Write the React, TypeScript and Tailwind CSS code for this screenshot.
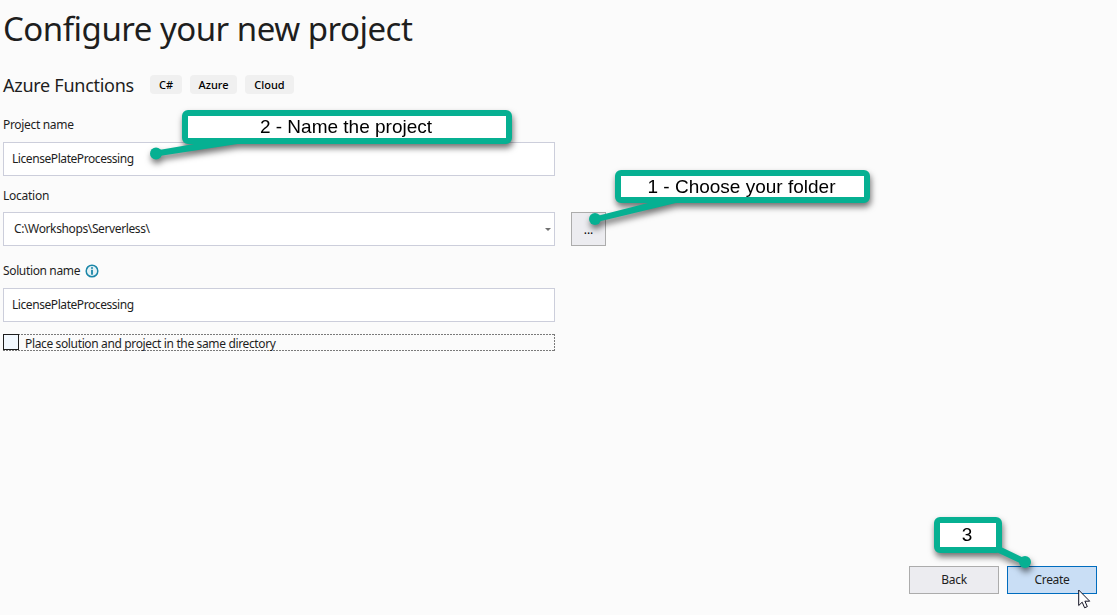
import React from "react";

const GREEN = "#06b092";

function Tag({ children, className }: { children: React.ReactNode; className: string }) {
  return (
    <span className={`flex h-[19px] items-center justify-center rounded-[4px] bg-[#f0f0f0] text-[11px] leading-none font-medium whitespace-nowrap text-black ${className}`}>
      {children}
    </span>
  );
}

function Callout({ children, className }: { children: React.ReactNode; className: string }) {
  return (
    <div
      className={`absolute flex items-center justify-center rounded-[6px] border-[6px] border-[#06b092] bg-white pr-[2px] font-['Liberation_Sans',Arial,sans-serif] text-[19px] leading-none whitespace-nowrap text-black ${className}`}
    >
      {children}
    </div>
  );
}

function InfoIcon() {
  return (
    <svg width="14" height="14" viewBox="0 0 14 14" className="ml-[5px] shrink-0">
      <circle cx="7" cy="7" r="5.8" fill="#e3f1f5" stroke="#1a86a8" strokeWidth="1.5" />
      <rect x="6.1" y="3.2" width="1.8" height="1.6" fill="#1a86a8" />
      <rect x="6.1" y="5.8" width="1.8" height="4.9" fill="#1a86a8" />
    </svg>
  );
}

export default function App() {
  return (
    <div className="relative flex h-[615px] w-[1117px] flex-col overflow-hidden bg-[#fbfbfb] pl-[3px] font-['Noto_Sans','Open_Sans',sans-serif] text-[12px] leading-[16px] text-[#1e1e1e]">
      <h1 className="h-[72px] pt-[5px] text-[33px] leading-[48px] font-normal tracking-[-0.5px] whitespace-nowrap">
        Configure your new project
      </h1>

      <div className="flex h-[26px] items-center">
        <h2 className="w-[147px] text-[18px] leading-[26px] font-normal tracking-[-0.27px] whitespace-nowrap">Azure Functions</h2>
        <div className="flex gap-[8px] pb-[2px]">
          <Tag className="w-[32px]">C#</Tag>
          <Tag className="w-[47px]">Azure</Tag>
          <Tag className="w-[49px]">Cloud</Tag>
        </div>
      </div>

      <label className="mt-[19px] h-[25px] tracking-[-0.32px]">Project name</label>
      <div className="flex h-[34px] w-[552px] items-center border border-[#cccedb] bg-white pl-[8px] tracking-[-0.43px]">
        LicensePlateProcessing
      </div>

      <label className="mt-[12px] h-[24px] tracking-[-0.25px]">Location</label>
      <div className="flex gap-[16px]">
        <div className="flex h-[34px] w-[552px] items-center justify-between border border-[#cccedb] bg-white pr-[3px] pl-[10px] tracking-[-0.38px]">
          <span>C:\Workshops\Serverless\</span>
          <svg width="6" height="3" viewBox="0 0 6 3">
            <path d="M0 0h6L3 3z" fill="#717171" />
          </svg>
        </div>
        <button className="flex h-[34px] w-[35px] items-center justify-center border border-[#acacac] bg-[#ececf0] pt-[2px] text-black">...</button>
      </div>

      <div className="mt-[17px] flex h-[25px] items-start">
        <label className="tracking-[-0.36px]">Solution name</label>
        <span className="pt-[1px]">
          <InfoIcon />
        </span>
      </div>
      <div className="flex h-[34px] w-[552px] items-center border border-[#cccedb] bg-white pl-[8px] tracking-[-0.43px]">
        LicensePlateProcessing
      </div>

      <div className="relative mt-[12px] flex h-[17px] w-[552px]">
        <svg className="absolute inset-0" width="552" height="17">
          <path d="M0 .5h552M0 16.5h552M551.5 0v17" stroke="#7a7a7a" strokeDasharray="2 1" fill="none" />
        </svg>
        <span className="relative h-[16px] w-[16px] border border-[#1e1e1e] bg-[#f3f9ff]" />
        <span className="relative ml-[6px] pt-[2px] tracking-[-0.36px] whitespace-nowrap">Place solution and project in the same directory</span>
      </div>

      <div className="mt-auto mr-[20px] mb-[21px] flex justify-end gap-[8px] tracking-[-0.3px]">
        <button className="h-[28px] w-[90px] border border-[#acacac] bg-[#ececf0]">Back</button>
        <button className="h-[28px] w-[90px] border border-[#006cbe] bg-[#c9def5]">Create</button>
      </div>

      <div className="pointer-events-none absolute inset-0 drop-shadow-[1px_4px_3px_rgba(0,0,0,0.55)]">
        <svg className="absolute inset-0" width="1117" height="615">
          <g fill={GREEN}>
            <path d="M156 150.5L200 143H244L156 156.5z" />
            <circle cx="156" cy="153.500" r="6" />
            <path d="M595 216.500L652 202H680L595 222.500z" />
            <circle cx="595" cy="219" r="6" />
            <path d="M990 549L1001 547L1026 559L1024 565z" />
            <circle cx="1025" cy="562" r="6" />
          </g>
        </svg>
        <Callout className="top-[110px] left-[182px] h-[34px] w-[330px] pb-[2px]">2 - Name the project</Callout>
        <Callout className="top-[170px] left-[615px] h-[33px] w-[255px]">1 - Choose your folder</Callout>
        <Callout className="top-[517px] left-[934px] h-[36px] w-[68px] pb-[2px]">3</Callout>
      </div>

      <svg className="absolute top-[589px] left-[1078px]" width="13" height="21" viewBox="0 0 13 21">
        <path d="M.7 1v15.500l3.500-3.300 2.400 5.600 2.700-1.200-2.400-5.400h4.800z" fill="#fff" stroke="#111122" strokeWidth="1" />
      </svg>
    </div>
  );
}
